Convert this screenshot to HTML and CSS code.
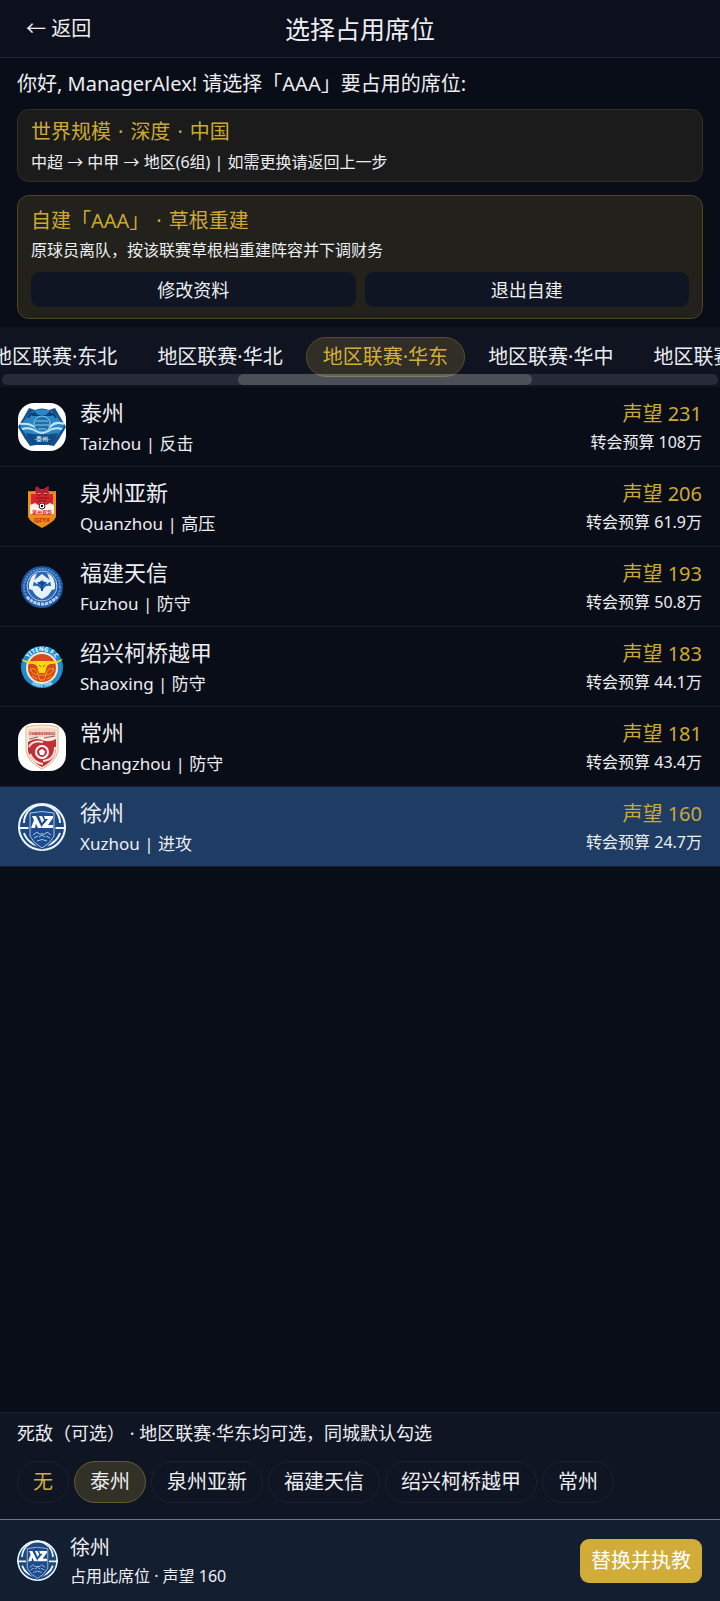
FILE: index.html
```html
<!DOCTYPE html>
<html lang="zh-CN">
<head>
  <meta charset="UTF-8">
  <meta name="viewport" content="width=device-width, initial-scale=1">
  <title>选择占用席位</title>
  <link rel="stylesheet" href="styles.css">
</head>
<body>

  <header class="topbar">
    <button class="back" type="button">← 返回</button>
    <h1>选择占用席位</h1>
  </header>

  <section class="intro">
    <p class="greeting">你好, ManagerAlex! 请选择「AAA」要占用的席位:</p>

    <div class="card">
      <h2><span>世界规模</span><span>·</span><span>深度</span><span>·</span><span>中国</span></h2>
      <p>中超 → 中甲 → 地区(6组) | 如需更换请返回上一步</p>
    </div>

    <div class="card card-custom">
      <h2><span>自建「AAA」</span><span>·</span><span>草根重建</span></h2>
      <p>原球员离队，按该联赛草根档重建阵容并下调财务</p>
      <div class="card-actions">
        <button type="button">修改资料</button>
        <button type="button">退出自建</button>
      </div>
    </div>
  </section>

  <nav class="tabs">
    <div class="tabs-track">
      <button class="tab" type="button">地区联赛·东北</button>
      <button class="tab" type="button">地区联赛·华北</button>
      <button class="tab active" type="button">地区联赛·华东</button>
      <button class="tab" type="button">地区联赛·华中</button>
      <button class="tab" type="button">地区联赛·华南</button>
    </div>
    <div class="scrollbar"><div class="thumb"></div></div>
  </nav>

  <main class="clubs">
    <button class="club" type="button">
      <svg class="crest" viewBox="0 0 48 48">
        <rect width="48" height="48" rx="16" fill="#fff"/>
        <path d="M11 5 L17 7 Q24 4 31 7 L37 5 L41 12 L48 24 L41 36 L36 43 L30 42 H18 L12 43 L7 36 L0 24 L7 12 Z" fill="#14508c"/>
        <path d="M10 12 L15 8 Q24 5 33 8 L38 12 L46 24 L39 33 H9 L2 24 Z" fill="#2a86c4"/>
        <path d="M16 8 L20 12 H28 L32 8 L34 13 H14 Z" fill="#0d3d70"/>
        <path d="M10 15 Q12 10 17 11 M38 15 Q36 10 31 11" fill="none" stroke="#0d3d70" stroke-width="2"/>
        <path d="M2 21 Q10 20 15 23 T24 27 T33 23 T46 21 M4 26 Q11 24 16 27 T24 30 T32 27 T44 26" fill="none" stroke="#c4e8f7" stroke-width="2"/>
        <circle cx="24" cy="21" r="8" fill="#1d6fae" stroke="#8ccbea"/>
        <path d="M18 18 H30 M17 22 H31 M20 26 H28" stroke="#8ccbea"/>
        <path d="M8 30 Q24 33 40 30 L34 41 H14 Z" fill="#124b84"/>
        <text x="24" y="38" class="crest-text" font-size="6" fill="#c5e7f5">·泰州·</text>
      </svg>
      <span class="club-info">
        <span class="club-name">泰州</span>
        <span class="club-style">Taizhou | 反击</span>
      </span>
      <span class="club-stats">
        <span class="rep">声望 231</span>
        <span class="budget">转会预算 108万</span>
      </span>
    </button>

    <button class="club" type="button">
      <svg class="crest" viewBox="0 0 48 48">
        <path d="M10 8 Q18 9 24 6 Q30 9 38 8 V34 Q36 39 24 45 Q12 39 10 34 Z" fill="#ea8f18"/>
        <path d="M13 11 H35 V25 H13 Z" fill="#d62430"/>
        <path d="M17 5 Q19 2 21 5 T27 5 T31 4 L30 10 H18 Z" fill="#b81f29"/>
        <path d="M18 9 Q20 15 24 10 Q28 15 31 9 M18 15 H31 M20 18 H28" fill="none" stroke="#7c1518"/>
        <path d="M12 22 L17 20 L20 22 L24 19 L28 22 L32 20 L36 22 V31 H12 Z" fill="#fff3ea"/>
        <circle cx="24" cy="23" r="3" fill="#fff" stroke="#222"/>
        <path d="M23 22 H25 V24 H23 Z" fill="#111"/>
        <text x="24" y="31" class="crest-text" font-size="5" fill="#d62430">泉州亚新</text>
        <text x="24" y="39" class="crest-text" font-size="6" fill="#c9202b">QZYX</text>
      </svg>
      <span class="club-info">
        <span class="club-name">泉州亚新</span>
        <span class="club-style">Quanzhou | 高压</span>
      </span>
      <span class="club-stats">
        <span class="rep">声望 206</span>
        <span class="budget">转会预算 61.9万</span>
      </span>
    </button>

    <button class="club" type="button">
      <svg class="crest" viewBox="0 0 48 48">
        <circle cx="24" cy="24" r="21" fill="#1b57a5"/>
        <circle cx="24" cy="24" r="18" fill="none" stroke="#5f92d0" stroke-width="2" stroke-dasharray="2 1"/>
        <circle cx="24" cy="23" r="15" fill="#2a66b4" stroke="#b5cfec"/>
        <path d="M11 26 Q10 14 19 10 L16 18 L14 27 Z M37 26 Q38 14 29 10 L32 18 L34 27 Z" fill="#e7f1fb"/>
        <path d="M15 18 L24 11 L33 18 L29 21 L24 17 L19 21 Z M13 24 Q19 21 22 25 L24 28 L26 25 Q29 21 35 24 Q32 33 24 36 Q16 33 13 24 Z" fill="#e7f1fb"/>
        <path d="M19 19 H29 L25 22 V28 H23 V22 Z" fill="#164a92"/>
        <path d="M9 34 Q24 48 39 34" fill="none" stroke="#b8d2ee" stroke-width="3" stroke-dasharray="3 1"/>
      </svg>
      <span class="club-info">
        <span class="club-name">福建天信</span>
        <span class="club-style">Fuzhou | 防守</span>
      </span>
      <span class="club-stats">
        <span class="rep">声望 193</span>
        <span class="budget">转会预算 50.8万</span>
      </span>
    </button>

    <button class="club" type="button">
      <svg class="crest" viewBox="0 0 48 48">
        <defs>
          <path id="arc-top" d="M8 24 A16 16 0 0 1 40 24"/>
          <path id="arc-bottom" d="M5 25 A19 19 0 0 0 43 25"/>
        </defs>
        <circle cx="24" cy="24" r="21" fill="#1c8fd2"/>
        <text class="crest-text" font-size="6" fill="#fff"><textPath href="#arc-top" startOffset="50%">YITENG F.C</textPath></text>
        <text class="crest-text" font-size="4" fill="#d8effb"><textPath href="#arc-bottom" startOffset="50%">SINCE 1996</textPath></text>
        <circle cx="24" cy="25" r="15" fill="#d9481c" stroke="#f4e9d2" stroke-width="2"/>
        <path d="M3 16 Q10 19 17 18 H31 Q38 19 45 16 Q41 21 32 21 L29 23 L27 30 H21 L19 23 L16 21 Q7 21 3 16 Z" fill="#fbd80f"/>
        <path d="M12 26 Q18 24 20 31 Q15 33 12 26 Z M36 26 Q30 24 28 31 Q33 33 36 26 Z M20 32 H28 L26 37 H22 Z M14 33 L19 36 M34 33 L29 36" fill="none" stroke="#f6a51b"/>
        <path d="M21 22 L23 24 M27 22 L25 24" stroke="#c43b16"/>
      </svg>
      <span class="club-info">
        <span class="club-name">绍兴柯桥越甲</span>
        <span class="club-style">Shaoxing | 防守</span>
      </span>
      <span class="club-stats">
        <span class="rep">声望 183</span>
        <span class="budget">转会预算 44.1万</span>
      </span>
    </button>

    <button class="club" type="button">
      <svg class="crest" viewBox="0 0 48 48">
        <rect width="48" height="48" rx="16" fill="#fff"/>
        <path d="M8 4 Q24 0 40 4 V28 Q38 39 24 46 Q10 39 8 28 Z" fill="#f7ecd9" stroke="#d9ba8b"/>
        <path d="M10 6 Q24 3 38 6 V14 H10 Z" fill="#f1d3c6"/>
        <text x="24" y="12" class="crest-text" font-size="4" fill="#b3202b">CHANGZHOU</text>
        <path d="M10 19 Q17 14 24 17 T38 16 V28 Q36 38 24 44 Q12 38 10 28 Z" fill="#c32e3a"/>
        <path d="M11 16 L20 14 M26 15 L37 13" stroke="#8c5b5d"/>
        <path d="M11 24 Q14 17 25 19 M37 24 Q37 37 25 38 M12 31 Q16 40 25 41" fill="none" stroke="#f5e3dc" stroke-width="2"/>
        <circle cx="24" cy="29" r="6" fill="#c32e3a" stroke="#fff" stroke-width="2"/>
        <path d="M24 26 L27 28 L26 32 H22 L21 28 Z" fill="#fff"/>
      </svg>
      <span class="club-info">
        <span class="club-name">常州</span>
        <span class="club-style">Changzhou | 防守</span>
      </span>
      <span class="club-stats">
        <span class="rep">声望 181</span>
        <span class="budget">转会预算 43.4万</span>
      </span>
    </button>

    <button class="club selected" type="button">
      <svg class="crest" viewBox="0 0 48 48">
        <defs>
          <clipPath id="xz-clip"><rect width="48" height="48" rx="18"/></clipPath>
        </defs>
        <g id="xz-crest" clip-path="url(#xz-clip)">
          <circle cx="24" cy="24" r="25" fill="#1f4780"/>
          <circle cx="24" cy="24" r="23" fill="none" stroke="#eef5fb" stroke-width="2"/>
          <path d="M6 20 A18 18 0 0 1 42 20 M6 30 A19 19 0 0 0 42 30" fill="none" stroke="#eef5fb" stroke-width="2"/>
          <path d="M0 25 H48" stroke="#eef5fb" stroke-width="2"/>
          <path d="M12 10 Q24 7 36 10 V33 Q33 40 24 45 Q15 40 12 33 Z" fill="#1d4b8f" stroke="#1f4780" stroke-width="3"/>
          <path d="M12 10 Q24 7 36 10 V33 Q33 40 24 45 Q15 40 12 33 Z" fill="#1d4b8f" stroke="#a9c8e6"/>
          <path d="M14 13 L18 13 L24 25 H20 Z M18 20 L17 25 H13 L16 17 Z M21 13 L24 13 L26 17 L24 20 Z M26 13 H35 V15 L30 22 H35 V25 H24 V23 L30 16 H27 Z" fill="#fff"/>
          <path d="M15 32 L19 29 L21 31 H27 L29 29 L33 32 M16 35 L20 33 M28 33 L32 35 M21 34 L24 32 L27 34 M19 38 Q24 35 29 38" fill="none" stroke="#a9c8e6"/>
        </g>
      </svg>
      <span class="club-info">
        <span class="club-name">徐州</span>
        <span class="club-style">Xuzhou | 进攻</span>
      </span>
      <span class="club-stats">
        <span class="rep">声望 160</span>
        <span class="budget">转会预算 24.7万</span>
      </span>
    </button>
  </main>

  <section class="rivals">
    <p>死敌（可选） · 地区联赛·华东均可选，同城默认勾选</p>
    <div class="chips">
      <button class="chip none" type="button">无</button>
      <button class="chip active" type="button">泰州</button>
      <button class="chip" type="button">泉州亚新</button>
      <button class="chip" type="button">福建天信</button>
      <button class="chip" type="button">绍兴柯桥越甲</button>
      <button class="chip" type="button">常州</button>
    </div>
  </section>

  <footer class="confirm">
    <svg class="crest-small" viewBox="0 0 48 48"><use href="#xz-crest"/></svg>
    <div class="confirm-info">
      <p class="confirm-name">徐州</p>
      <p class="confirm-sub">占用此席位 · 声望 160</p>
    </div>
    <button class="primary" type="button">替换并执教</button>
  </footer>

</body>
</html>
```
FILE: styles.css
```css
* { box-sizing: border-box; margin: 0; padding: 0; }

body {
  display: flex;
  flex-direction: column;
  min-height: 100vh;
  overflow-x: hidden;
  background: #090d17;
  color: #eceef2;
  font-family: "Noto Sans", "Noto Sans CJK SC", sans-serif;
  font-size: 16px;
}
button { border: 0; background: none; color: inherit; font: inherit; white-space: nowrap; cursor: pointer; }
h1, h2 { font-weight: 400; }

.topbar {
  display: grid;
  grid-template-columns: 1fr auto 1fr;
  align-items: center;
  height: 58px;
  padding: 0 26px;
  background: #0c101c;
  border-bottom: 1px solid #1d2233;
}
.topbar h1 { font-size: 25px; line-height: 30px; }
.back { justify-self: start; font-size: 20px; line-height: 28px; }

.intro { padding: 12px 17px 8px; }
.greeting { margin-bottom: 11px; font-size: 20px; line-height: 28px; }
.card {
  margin-bottom: 13px;
  padding: 9px 13px 8px;
  border: 1px solid #34301f;
  border-radius: 12px;
  background: #1b1b1b;
}
.card h2 { display: flex; gap: 7px; margin-bottom: 6px; color: #cda934; font-size: 20px; line-height: 26px; }
.card p { line-height: 22px; }
.card-custom { margin-bottom: 0; padding: 12px 13px 11px; border-color: #51441f; background: #22211c; }
.card-custom h2 { margin-bottom: 5px; }
.card-actions { display: flex; gap: 9px; margin-top: 11px; }
.card-actions button { flex: 1; height: 35px; border-radius: 9px; background: #101523; font-size: 18px; line-height: 26px; }

.tabs { position: relative; padding: 10px 0; overflow: hidden; background: #101421; }
.tabs-track { display: flex; gap: 6px; margin-left: -25px; }
.tab { flex: none; height: 40px; padding: 0 16px; border: 1px solid transparent; border-radius: 20px; font-size: 20px; line-height: 26px; }
.tab.active { border-color: #575027; background: #302e27; color: #d4af37; }
.scrollbar { position: absolute; left: 2px; right: 2px; bottom: 2px; height: 11px; border-radius: 6px; background: rgba(255, 255, 255, 0.1); }
.thumb { width: 41%; height: 100%; margin-left: 33%; border-radius: 6px; background: rgba(255, 255, 255, 0.17); }

.clubs { flex: 1; }
.club {
  display: flex;
  align-items: center;
  gap: 14px;
  width: 100%;
  height: 80px;
  padding: 0 18px;
  border-bottom: 1px solid #1a1f2c;
  text-align: left;
}
.club.selected { background: #1f3d64; }
.crest { flex: none; width: 48px; height: 48px; }
.crest-text { font-family: "Noto Sans", "Noto Sans CJK SC", sans-serif; font-weight: 700; text-anchor: middle; }
.club-info { display: flex; flex: 1; flex-direction: column; gap: 5px; }
.club-name { font-size: 22px; line-height: 30px; }
.club-style { font-size: 17px; line-height: 24px; }
.club-stats { display: flex; flex-direction: column; gap: 4px; text-align: right; }
.rep { color: #cda934; font-size: 20px; line-height: 26px; }
.budget { line-height: 22px; }

.rivals { padding: 7px 17px 16px; border-top: 1px solid #1d2130; background: #101523; }
.rivals p { margin-bottom: 15px; font-size: 18px; line-height: 26px; }
.chips { display: flex; flex-wrap: wrap; gap: 5px; }
.chip { height: 42px; padding: 0 15px; border: 1px solid #1c2232; border-radius: 21px; font-size: 20px; line-height: 28px; }
.chip.none { color: #d4af37; }
.chip.active { border-color: #665a2c; background: #313128; }

.confirm {
  display: flex;
  align-items: center;
  gap: 12px;
  height: 82px;
  padding: 0 18px 0 17px;
  border-top: 1px solid #3f83c4;
  background: #131e31;
}
.crest-small { flex: none; width: 41px; height: 41px; border-radius: 50%; }
.confirm-info { flex: 1; }
.confirm-name { margin-bottom: 3px; font-size: 20px; line-height: 28px; }
.confirm-sub { line-height: 22px; }
.primary { height: 44px; padding: 0 11px; border-radius: 9px; background: #d1ac38; color: #fff; font-size: 20px; line-height: 28px; }
```
